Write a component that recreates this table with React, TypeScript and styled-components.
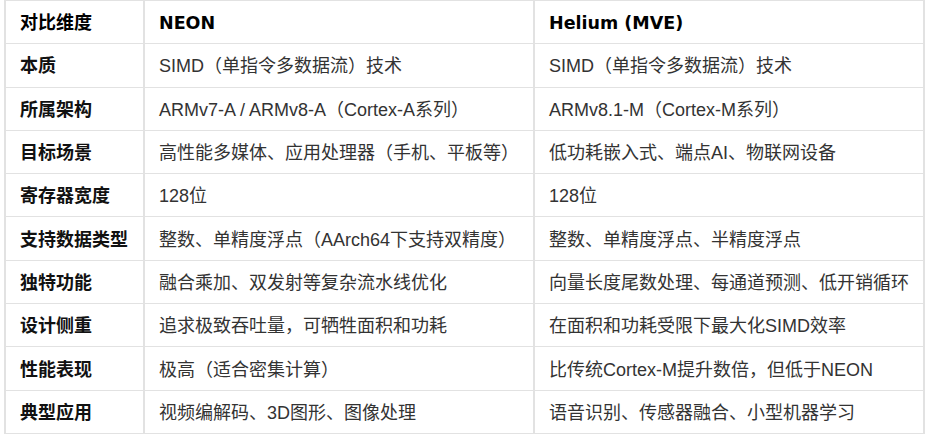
import React from 'react';
import styled, { createGlobalStyle } from 'styled-components';

const GlobalStyle = createGlobalStyle`
    html, body {
        margin: 0;
        padding: 0;
        background: #fff;
    }
    body {
        font-family: "Liberation Sans", Arial, "Noto Sans CJK SC", sans-serif;
    }
`;

const Table = styled.table`
    margin: 0 0 0 4px;
    width: 919px;
    border-collapse: collapse;
    table-layout: fixed;
    color: #333;
    font-family: "Liberation Sans", Arial, "Noto Sans CJK SC", sans-serif;
    font-size: 18px;
`;

const Col = styled.col<{ $w: number }>`
    width: ${p => p.$w}px;
`;

const Row = styled.tr`
    height: 43.3px;
`;

const Cell = styled.td`
    border-left: 2px solid #e2e2e2;
    border-right: 2px solid #e2e2e2;
    border-top: 1px solid #e2e2e2;
    border-bottom: 1px solid #e2e2e2;
    padding: 2px 14px 0;
    vertical-align: middle;
    white-space: nowrap;
    line-height: 20px;
`;

const HeadCell = styled(Cell).attrs({ as: 'th' })<{ $latin?: boolean }>`
    text-align: left;
    color: #000;
    font-weight: 700;
    font-size: ${p => (p.$latin ? '17.5px' : '18px')};
    font-family: ${p => p.$latin
        ? '"DejaVu Sans", "Noto Sans CJK SC", sans-serif'
        : '"Liberation Sans", "Noto Sans CJK SC", sans-serif'};
`;

const LabelCell = styled(Cell)`
    color: #111;
    font-weight: 700;
`;

const rows: [string, string, string][] = [
    ['本质', 'SIMD（单指令多数据流）技术', 'SIMD（单指令多数据流）技术'],
    ['所属架构', 'ARMv7-A / ARMv8-A（Cortex-A系列）', 'ARMv8.1-M（Cortex-M系列）'],
    ['目标场景', '高性能多媒体、应用处理器（手机、平板等）', '低功耗嵌入式、端点AI、物联网设备'],
    ['寄存器宽度', '128位', '128位'],
    ['支持数据类型', '整数、单精度浮点（AArch64下支持双精度）', '整数、单精度浮点、半精度浮点'],
    ['独特功能', '融合乘加、双发射等复杂流水线优化', '向量长度尾数处理、每通道预测、低开销循环'],
    ['设计侧重', '追求极致吞吐量，可牺牲面积和功耗', '在面积和功耗受限下最大化SIMD效率'],
    ['性能表现', '极高（适合密集计算）', '比传统Cortex-M提升数倍，但低于NEON'],
    ['典型应用', '视频编解码、3D图形、图像处理', '语音识别、传感器融合、小型机器学习'],
];

export default function App() {
    return (
        <>
            <GlobalStyle />
            <Table>
                <colgroup>
                    <Col $w={139} />
                    <Col $w={390} />
                    <Col $w={390} />
                </colgroup>
                <thead>
                    <Row>
                        <HeadCell>对比维度</HeadCell>
                        <HeadCell $latin>NEON</HeadCell>
                        <HeadCell $latin>Helium (MVE)</HeadCell>
                    </Row>
                </thead>
                <tbody>
                    {rows.map(([label, neon, helium]) => (
                        <Row key={label}>
                            <LabelCell>{label}</LabelCell>
                            <Cell>{neon}</Cell>
                            <Cell>{helium}</Cell>
                        </Row>
                    ))}
                </tbody>
            </Table>
        </>
    );
}
